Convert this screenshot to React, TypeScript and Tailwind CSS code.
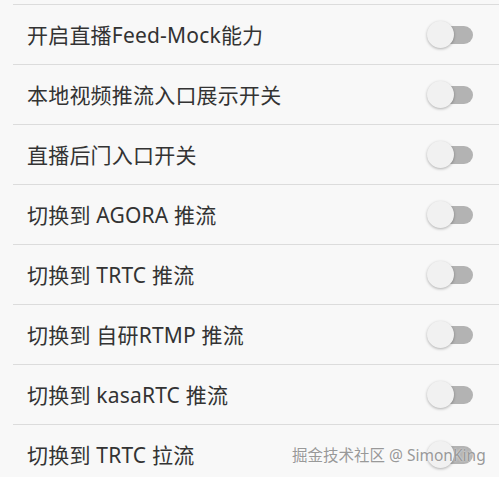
import React from "react"

const rows = [
  "开启直播Feed-Mock能力",
  "本地视频推流入口展示开关",
  "直播后门入口开关",
  "切换到 AGORA 推流",
  "切换到 TRTC 推流",
  "切换到 自研RTMP 推流",
  "切换到 kasaRTC 推流",
  "切换到 TRTC 拉流",
]

function Toggle() {
  return (
    <div className="relative w-[46px] h-[28px] flex items-center">
      <div className="absolute right-0 w-[40px] h-[18px] rounded-full bg-[#b3b3b3]" />
      <div className="absolute left-0 w-[27px] h-[27px] rounded-full bg-[#f1f1f1] shadow-[0_1px_3px_rgba(0,0,0,0.3)]" />
    </div>
  )
}

export default function App() {
  return (
    <div
      className="relative w-[499px] h-[477px] overflow-hidden bg-[#f8f8f8] text-[#333]"
      style={{ fontFamily: '"Noto Sans", "Noto Sans CJK SC", sans-serif' }}
    >
      <div className="h-[5px] ml-[13px] border-b border-[#dcdcdc]" />
      {rows.map((label) => (
        <div key={label} className="ml-[13px] h-[60px] border-b border-[#dcdcdc] flex items-center justify-between pl-[14px] pr-[26px]">
          <span className="text-[21px] leading-none tracking-[0.2px] pt-[2px]">{label}</span>
          <Toggle />
        </div>
      ))}
      {/* watermark */}
      <div className="absolute left-[292px] top-[444px] text-[15.5px] leading-[22px] text-[#999] whitespace-nowrap [text-shadow:0_0_2px_rgba(255,255,255,0.9)]">
        掘金技术社区 @ SimonKing
      </div>
    </div>
  )
}
